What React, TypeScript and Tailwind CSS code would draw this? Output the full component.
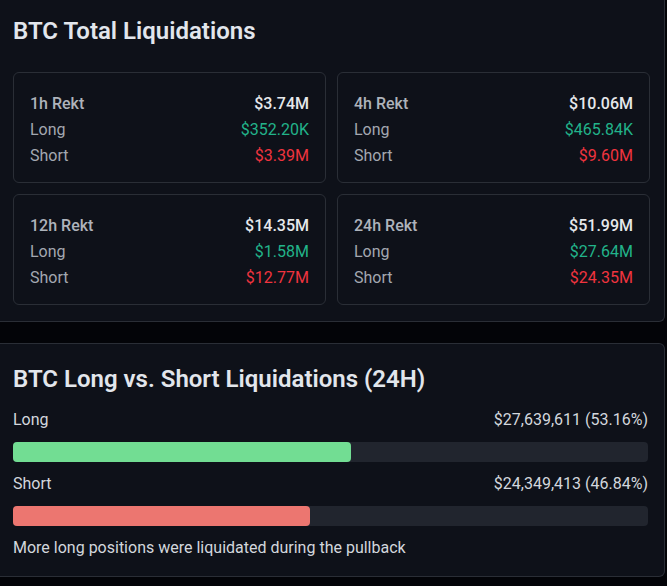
const stats = [
  { label: "1h Rekt", total: "$3.74M", long: "$352.20K", short: "$3.39M" },
  { label: "4h Rekt", total: "$10.06M", long: "$465.84K", short: "$9.60M" },
  { label: "12h Rekt", total: "$14.35M", long: "$1.58M", short: "$12.77M" },
  { label: "24h Rekt", total: "$51.99M", long: "$27.64M", short: "$24.35M" },
];

const bars = [
  { label: "Long", value: "$27,639,611 (53.16%)", pct: 53.16, color: "bg-[#72dd93]" },
  { label: "Short", value: "$24,349,413 (46.84%)", pct: 46.84, color: "bg-[#ec7670]" },
];

function StatCard({ label, total, long, short }: (typeof stats)[number]) {
  return (
    <div className="rounded-md border border-[#2a2e36] px-4 pt-[18px] pb-[13px] text-[16px] leading-[26px]">
      <div className="flex justify-between">
        <span className="font-medium text-[#aeb3bb]">{label}</span>
        <span className="font-medium text-[#e6e8eb]">{total}</span>
      </div>
      <div className="flex justify-between">
        <span className="text-[#a3a8b0]">Long</span>
        <span className="text-[#22b38a]">{long}</span>
      </div>
      <div className="flex justify-between">
        <span className="text-[#a3a8b0]">Short</span>
        <span className="text-[#f0343f]">{short}</span>
      </div>
    </div>
  );
}

export default function App() {
  return (
    <div
      className="h-[586px] w-[667px] overflow-hidden bg-[#030408]"
      style={{ fontFamily: "Roboto, 'Liberation Sans', sans-serif" }}
    >
      <section className="mr-[2px] rounded-br-md border-r border-b border-[#2a2e36] bg-[#0e1119] pt-[15px] pr-[14px] pb-4 pl-[13px]">
        <h2 className="text-[24px] leading-[32px] font-semibold text-[#e2e6ec]">BTC Total Liquidations</h2>
        <div className="mt-[25px] grid grid-cols-2 gap-[11px]">
          {stats.map((s) => (
            <StatCard key={s.label} {...s} />
          ))}
        </div>
      </section>

      <section className="mt-[21px] mr-[2px] rounded-r-md border-t border-r border-b border-[#2a2e36] bg-[#0e1119] pt-[19px] pr-[16px] pb-4 pl-[13px]">
        <h2 className="text-[24px] leading-[32px] font-semibold text-[#e2e6ec]">
          BTC Long vs. Short Liquidations (24H)
        </h2>
        <div className="mt-[13px] flex flex-col gap-[10px] text-[16px] leading-[24px] text-[#d3d7dd]">
          {bars.map((b) => (
            <div key={b.label} className="flex flex-col gap-[10px]">
              <div className="flex justify-between">
                <span>{b.label}</span>
                <span>{b.value}</span>
              </div>
              <div className="h-5 rounded bg-[#21252e]">
                <div className={`h-full rounded ${b.color}`} style={{ width: `${b.pct}%` }} />
              </div>
            </div>
          ))}
          <p>More long positions were liquidated during the pullback</p>
        </div>
      </section>
    </div>
  );
}
